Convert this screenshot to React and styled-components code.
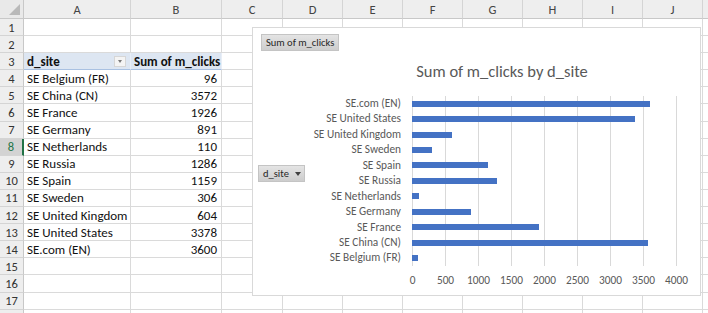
import styled, { createGlobalStyle } from "styled-components";

const GlobalStyle = createGlobalStyle`
  html, body {
    margin: 0;
    padding: 0;
    background: #ffffff;
    overflow: hidden;
  }
  * {
    box-sizing: border-box;
  }
`;

const FONT = `Carlito, Lato, "Liberation Sans", sans-serif`;

const Wrap = styled.div`
  position: relative;
  width: 708px;
  height: 313px;
  overflow: hidden;
  font-family: ${FONT};
`;

const Sheet = styled.div`
  display: grid;
  grid-template-columns: 24px 107px 91px 61px repeat(7, 60px) 60px;
  grid-template-rows: 19px repeat(17, 17.1px) 20px;
`;

const Corner = styled.div`
  position: relative;
  background: #e9e9e9;
  border-right: 1px solid #c8c8c8;
  border-bottom: 1px solid #c8c8c8;
  &::after {
    content: "";
    position: absolute;
    right: 3px;
    bottom: 3px;
    border-style: solid;
    border-width: 0 0 11px 11px;
    border-color: transparent transparent #b9b9b9 transparent;
  }
`;

const ColHeader = styled.div`
  display: flex;
  align-items: center;
  justify-content: center;
  background: #eeeeee;
  border-right: 1px solid #d4d4d4;
  border-bottom: 1px solid #c8c8c8;
  color: #444444;
  font-size: 12.5px;
`;

const RowHeader = styled.div`
  display: flex;
  align-items: center;
  justify-content: center;
  background: ${(p) => (p.$active ? "#d3d3d3" : "#eeeeee")};
  border-right: ${(p) => (p.$active ? "2px solid #217346" : "1px solid #c8c8c8")};
  border-bottom: 1px solid #d4d4d4;
  color: ${(p) => (p.$active ? "#217346" : "#333333")};
  font-size: 12.5px;
`;

const Cell = styled.div`
  display: flex;
  align-items: center;
  justify-content: ${(p) => (p.$num ? "flex-end" : "space-between")};
  padding: 0 4px 0 3px;
  background: ${(p) => (p.$head ? "#dde6f2" : "#ffffff")};
  border-right: 1px solid ${(p) => (p.$head ? "#e8eef7" : "#dadada")};
  border-bottom: 1px solid ${(p) => (p.$head ? "#a9c1e2" : "#dadada")};
  color: #111111;
  font-size: 13px;
  font-weight: ${(p) => (p.$head ? 700 : 400)};
  white-space: nowrap;
`;

const FilterButton = styled.span`
  display: flex;
  align-items: center;
  justify-content: center;
  width: 12px;
  height: 11px;
  background: #f4f4f4;
  border: 1px solid #d6d6d6;
  &::after {
    content: "";
    border-style: solid;
    border-width: 3px 2.5px 0 2.5px;
    border-color: #7a7a7a transparent transparent transparent;
  }
`;

const Chart = styled.div`
  position: absolute;
  left: 252px;
  top: 27px;
  width: 449px;
  height: 269px;
  background: #ffffff;
  border: 1px solid #d9d9d9;
  display: flex;
  flex-direction: column;
  color: #595959;
`;

const FieldButton = styled.div`
  display: flex;
  align-items: center;
  gap: 6px;
  height: 17px;
  padding: 0 4px;
  background: linear-gradient(#e4e4e4, #cdcdcd);
  border: 1px solid #c4c4c4;
  color: #262626;
  font-size: 10.5px;
  white-space: nowrap;
`;

const TopBar = styled.div`
  display: flex;
  padding: 6px 0 0 8px;
`;

const Title = styled.div`
  margin: 10px 0 0 51px;
  text-align: center;
  font-size: 16.5px;
  line-height: 20px;
  color: #595959;
`;

const Body = styled.div`
  display: grid;
  grid-template-columns: 47px 96px 11px 265px;
  padding: 15px 0 0 5px;
`;

const FieldSlot = styled.div`
  grid-row: 1;
  grid-column: 1;
  padding-top: 69px;
`;

const Caret = styled.span`
  border-style: solid;
  border-width: 4px 3px 0 3px;
  border-color: #404040 transparent transparent transparent;
`;

const Labels = styled.div`
  grid-row: 1;
  grid-column: 2;
  display: flex;
  flex-direction: column;
  align-items: flex-end;
`;

const Label = styled.div`
  height: 15.45px;
  line-height: 15.45px;
  font-size: 11.3px;
  white-space: nowrap;
`;

const Plot = styled.div`
  grid-row: 1;
  grid-column: 4;
  display: flex;
  flex-direction: column;
  width: 265px;
  background: repeating-linear-gradient(
    to right,
    #d9d9d9 0 1px,
    transparent 1px 33px
  );
`;

const BarRow = styled.div`
  display: flex;
  align-items: center;
  height: 15.45px;
`;

const Bar = styled.div`
  height: 6px;
  background: #4472c4;
`;

const Axis = styled.div`
  grid-row: 2;
  grid-column: 4;
  display: flex;
  margin: 7px 0 0 -16px;
`;

const Tick = styled.div`
  flex: none;
  width: 33px;
  text-align: center;
  font-size: 11.3px;
  line-height: 14px;
`;

const data = [
  ["SE Belgium (FR)", 96],
  ["SE China (CN)", 3572],
  ["SE France", 1926],
  ["SE Germany", 891],
  ["SE Netherlands", 110],
  ["SE Russia", 1286],
  ["SE Spain", 1159],
  ["SE Sweden", 306],
  ["SE United Kingdom", 604],
  ["SE United States", 3378],
  ["SE.com (EN)", 3600],
];

const cols = ["A", "B", "C", "D", "E", "F", "G", "H", "I", "J", ""];
const ticks = [0, 500, 1000, 1500, 2000, 2500, 3000, 3500, 4000];
const MAX = 4000;
const PLOT_W = 264;

function cellFor(row, col) {
  const key = row + "-" + col;
  if (row === 3 && col === 0) {
    return (
      <Cell key={key} $head>
        d_site
        <FilterButton />
      </Cell>
    );
  }
  if (row === 3 && col === 1) {
    return (
      <Cell key={key} $head>
        Sum of m_clicks
      </Cell>
    );
  }
  const item = data[row - 4];
  if (item && col === 0) return <Cell key={key}>{item[0]}</Cell>;
  if (item && col === 1)
    return (
      <Cell key={key} $num>
        {item[1]}
      </Cell>
    );
  return <Cell key={key} />;
}

function App() {
  const rows = Array.from({ length: 18 }, (_, i) => i + 1);
  const reversed = [...data].reverse();
  return (
    <Wrap>
      <GlobalStyle />
      <Sheet>
        <Corner />
        {cols.map((c, i) => (
          <ColHeader key={"h" + i}>{c}</ColHeader>
        ))}
        {rows.map((r) => [
          <RowHeader key={"r" + r} $active={r === 8}>
            {r <= 17 ? r : ""}
          </RowHeader>,
          ...cols.map((_, c) => cellFor(r, c)),
        ])}
      </Sheet>

      <Chart>
        <TopBar>
          <FieldButton>Sum of m_clicks</FieldButton>
        </TopBar>
        <Title>Sum of m_clicks by d_site</Title>
        <Body>
          <FieldSlot>
            <FieldButton>
              d_site <Caret />
            </FieldButton>
          </FieldSlot>
          <Labels>
            {reversed.map(([name]) => (
              <Label key={name}>{name}</Label>
            ))}
          </Labels>
          <Plot>
            {reversed.map(([name, v]) => (
              <BarRow key={name}>
                <Bar style={{ width: (v / MAX) * PLOT_W + "px" }} />
              </BarRow>
            ))}
          </Plot>
          <Axis>
            {ticks.map((t) => (
              <Tick key={t}>{t}</Tick>
            ))}
          </Axis>
        </Body>
      </Chart>
    </Wrap>
  );
}

export default App;
